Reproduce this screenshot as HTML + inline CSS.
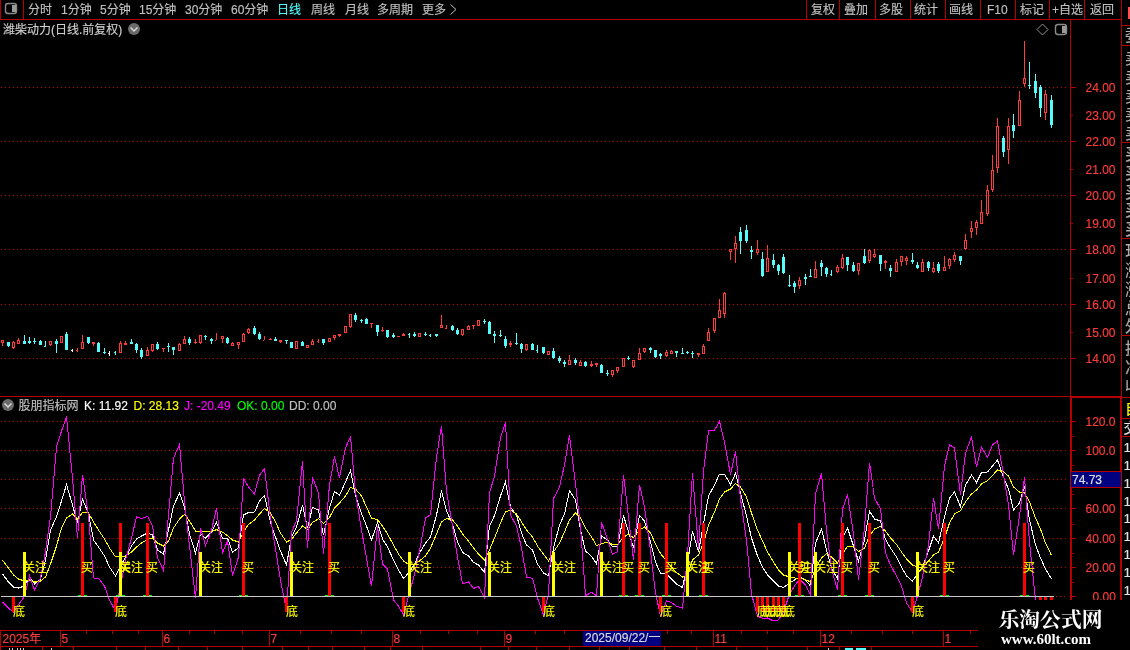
<!DOCTYPE html>
<html lang="zh-CN"><head><meta charset="utf-8"><title>潍柴动力 日线</title>
<style>
html,body{margin:0;padding:0;background:#000;overflow:hidden}
body{width:1130px;height:650px}
svg{display:block;font-family:"Liberation Sans","Noto Sans CJK SC",sans-serif;will-change:transform}
svg text{white-space:pre;stroke-width:0.15px;paint-order:stroke}
</style></head><body>
<svg width="1130" height="650" viewBox="0 0 1130 650" shape-rendering="crispEdges">
<rect width="1130" height="650" fill="#000"/>
<rect x="0" y="19" width="1122" height="1" fill="#b40000"/>
<rect x="0" y="0" width="1" height="20" fill="#b40000"/>
<rect x="23" y="0" width="1" height="20" fill="#b40000"/>
<rect x="806" y="0" width="1" height="20" fill="#b40000"/>
<rect x="839" y="0" width="1" height="20" fill="#b40000"/>
<rect x="875" y="0" width="1" height="20" fill="#b40000"/>
<rect x="910" y="0" width="1" height="20" fill="#b40000"/>
<rect x="945" y="0" width="1" height="20" fill="#b40000"/>
<rect x="980" y="0" width="1" height="20" fill="#b40000"/>
<rect x="1015" y="0" width="1" height="20" fill="#b40000"/>
<rect x="1049" y="0" width="1" height="20" fill="#b40000"/>
<rect x="1084" y="0" width="1" height="20" fill="#b40000"/>
<rect x="1121" y="0" width="1" height="650" fill="#b40000"/>
<rect x="1070" y="20" width="1" height="580" fill="#b40000"/>
<rect x="0" y="396" width="1122" height="1" fill="#b40000"/>
<rect x="0" y="630" width="978" height="1" fill="#b40000"/>
<rect x="0" y="646" width="978" height="1" fill="#b40000"/>
<rect x="0" y="630" width="1" height="20" fill="#b40000"/>
<rect x="5.5" y="3.5" width="11" height="10" rx="2.5" fill="none" stroke="#8a8a8a" stroke-width="1.4" shape-rendering="geometricPrecision"/>
<rect x="12" y="5" width="3.5" height="7" fill="#9a9a9a"/>
<text x="28" y="14" fill="#c0c0c0" stroke="#c0c0c0" font-size="12">分时</text>
<text x="61" y="14" fill="#c0c0c0" stroke="#c0c0c0" font-size="12">1分钟</text>
<text x="100" y="14" fill="#c0c0c0" stroke="#c0c0c0" font-size="12">5分钟</text>
<text x="139" y="14" fill="#c0c0c0" stroke="#c0c0c0" font-size="12">15分钟</text>
<text x="185" y="14" fill="#c0c0c0" stroke="#c0c0c0" font-size="12">30分钟</text>
<text x="231" y="14" fill="#c0c0c0" stroke="#c0c0c0" font-size="12">60分钟</text>
<text x="277" y="14" fill="#54fcfc" stroke="#54fcfc" font-size="12">日线</text>
<text x="311" y="14" fill="#c0c0c0" stroke="#c0c0c0" font-size="12">周线</text>
<text x="345" y="14" fill="#c0c0c0" stroke="#c0c0c0" font-size="12">月线</text>
<text x="377" y="14" fill="#c0c0c0" stroke="#c0c0c0" font-size="12">多周期</text>
<text x="422" y="14" fill="#c0c0c0" stroke="#c0c0c0" font-size="12">更多</text>
<path d="M450.5 4.5 L456 9.5 L450.5 14.5" fill="none" stroke="#c0c0c0" stroke-width="1" shape-rendering="geometricPrecision"/>
<text x="811" y="14" fill="#c0c0c0" stroke="#c0c0c0" font-size="12">复权</text>
<text x="844" y="14" fill="#c0c0c0" stroke="#c0c0c0" font-size="12">叠加</text>
<text x="879" y="14" fill="#c0c0c0" stroke="#c0c0c0" font-size="12">多股</text>
<text x="914" y="14" fill="#c0c0c0" stroke="#c0c0c0" font-size="12">统计</text>
<text x="949" y="14" fill="#c0c0c0" stroke="#c0c0c0" font-size="12">画线</text>
<text x="987" y="14" fill="#c0c0c0" stroke="#c0c0c0" font-size="12">F10</text>
<text x="1020" y="14" fill="#c0c0c0" stroke="#c0c0c0" font-size="12">标记</text>
<text x="1052" y="14" fill="#c0c0c0" stroke="#c0c0c0" font-size="12">+自选</text>
<text x="1090" y="14" fill="#c0c0c0" stroke="#c0c0c0" font-size="12">返回</text>
<text x="3" y="34" fill="#d0d0d0" stroke="#d0d0d0" font-size="12">潍柴动力(日线.前复权)</text>
<circle cx="134" cy="29" r="6" fill="#6a6a6a" shape-rendering="geometricPrecision"/>
<path d="M130.5 27.5 L134 31 L137.5 27.5" fill="none" stroke="#d8d8d8" stroke-width="1.5" shape-rendering="geometricPrecision"/>
<path d="M1042.5 24 L1048 29.5 L1042.5 35 L1037 29.5 Z" fill="none" stroke="#909090" stroke-width="1" shape-rendering="geometricPrecision"/>
<rect x="1055.5" y="24.5" width="11" height="10" rx="2.5" fill="none" stroke="#8a8a8a" stroke-width="1.4" shape-rendering="geometricPrecision"/>
<rect x="1062" y="26" width="3.5" height="7" fill="#9a9a9a"/>
<line x1="1" y1="358.5" x2="1068" y2="358.5" stroke="#c80000" stroke-width="1" stroke-dasharray="1 3"/>
<rect x="1070" y="358" width="6" height="1" fill="#b40000"/>
<text x="1085.5" y="363" fill="#ff3c3c" stroke="#ff3c3c" font-size="12">14.00</text>
<rect x="1070" y="332" width="3" height="1" fill="#b40000"/>
<text x="1085.5" y="337" fill="#ff3c3c" stroke="#ff3c3c" font-size="12">15.00</text>
<line x1="1" y1="304.5" x2="1068" y2="304.5" stroke="#c80000" stroke-width="1" stroke-dasharray="1 3"/>
<rect x="1070" y="304" width="6" height="1" fill="#b40000"/>
<text x="1085.5" y="309" fill="#ff3c3c" stroke="#ff3c3c" font-size="12">16.00</text>
<rect x="1070" y="278" width="3" height="1" fill="#b40000"/>
<text x="1085.5" y="283" fill="#ff3c3c" stroke="#ff3c3c" font-size="12">17.00</text>
<line x1="1" y1="249.5" x2="1068" y2="249.5" stroke="#c80000" stroke-width="1" stroke-dasharray="1 3"/>
<rect x="1070" y="249" width="6" height="1" fill="#b40000"/>
<text x="1085.5" y="254" fill="#ff3c3c" stroke="#ff3c3c" font-size="12">18.00</text>
<rect x="1070" y="223" width="3" height="1" fill="#b40000"/>
<text x="1085.5" y="228" fill="#ff3c3c" stroke="#ff3c3c" font-size="12">19.00</text>
<line x1="1" y1="195.5" x2="1068" y2="195.5" stroke="#c80000" stroke-width="1" stroke-dasharray="1 3"/>
<rect x="1070" y="195" width="6" height="1" fill="#b40000"/>
<text x="1085.5" y="200" fill="#ff3c3c" stroke="#ff3c3c" font-size="12">20.00</text>
<rect x="1070" y="169" width="3" height="1" fill="#b40000"/>
<text x="1085.5" y="174" fill="#ff3c3c" stroke="#ff3c3c" font-size="12">21.00</text>
<line x1="1" y1="141.5" x2="1068" y2="141.5" stroke="#c80000" stroke-width="1" stroke-dasharray="1 3"/>
<rect x="1070" y="141" width="6" height="1" fill="#b40000"/>
<text x="1085.5" y="146" fill="#ff3c3c" stroke="#ff3c3c" font-size="12">22.00</text>
<rect x="1070" y="115" width="3" height="1" fill="#b40000"/>
<text x="1085.5" y="120" fill="#ff3c3c" stroke="#ff3c3c" font-size="12">23.00</text>
<line x1="1" y1="87.5" x2="1068" y2="87.5" stroke="#c80000" stroke-width="1" stroke-dasharray="1 3"/>
<rect x="1070" y="87" width="6" height="1" fill="#b40000"/>
<text x="1085.5" y="92" fill="#ff3c3c" stroke="#ff3c3c" font-size="12">24.00</text>
<rect x="2" y="343" width="1" height="3" fill="#ff3c3c"/>
<rect x="1.5" y="340.5" width="2" height="2" fill="#000" stroke="#ff3c3c" stroke-width="1"/>
<rect x="8" y="342" width="1" height="5" fill="#54fcfc"/>
<rect x="7" y="342" width="3" height="4" fill="#54fcfc"/>
<rect x="13" y="341" width="1" height="1" fill="#ff3c3c"/>
<rect x="13" y="348" width="1" height="1" fill="#ff3c3c"/>
<rect x="12.5" y="342.5" width="2" height="5" fill="#000" stroke="#ff3c3c" stroke-width="1"/>
<rect x="18" y="338" width="1" height="2" fill="#ff3c3c"/>
<rect x="17.5" y="340.5" width="2" height="3" fill="#000" stroke="#ff3c3c" stroke-width="1"/>
<rect x="24" y="335" width="1" height="9" fill="#54fcfc"/>
<rect x="23" y="341" width="3" height="3" fill="#54fcfc"/>
<rect x="29" y="337" width="1" height="7" fill="#54fcfc"/>
<rect x="28" y="341" width="3" height="2" fill="#54fcfc"/>
<rect x="34" y="338" width="1" height="6" fill="#54fcfc"/>
<rect x="33" y="341" width="3" height="1" fill="#54fcfc"/>
<rect x="40" y="340" width="1" height="5" fill="#54fcfc"/>
<rect x="39" y="341" width="3" height="4" fill="#54fcfc"/>
<rect x="45" y="341" width="1" height="6" fill="#54fcfc"/>
<rect x="44" y="346" width="1" height="1" fill="#54fcfc"/>
<rect x="50" y="345" width="1" height="1" fill="#ff3c3c"/>
<rect x="49.5" y="341.5" width="2" height="3" fill="#000" stroke="#ff3c3c" stroke-width="1"/>
<rect x="56" y="339" width="1" height="14" fill="#54fcfc"/>
<rect x="55" y="341" width="3" height="3" fill="#54fcfc"/>
<rect x="60.5" y="336.5" width="2" height="6" fill="#000" stroke="#ff3c3c" stroke-width="1"/>
<rect x="66" y="332" width="1" height="18" fill="#54fcfc"/>
<rect x="65" y="334" width="3" height="16" fill="#54fcfc"/>
<rect x="72" y="349" width="1" height="3" fill="#ffffff"/>
<rect x="71" y="350" width="1" height="1" fill="#ffffff"/>
<rect x="77" y="348" width="1" height="4" fill="#ff3c3c"/>
<rect x="76" y="350" width="1" height="1" fill="#ff3c3c"/>
<rect x="82" y="335" width="1" height="7" fill="#ff3c3c"/>
<rect x="81.5" y="342.5" width="2" height="6" fill="#000" stroke="#ff3c3c" stroke-width="1"/>
<rect x="88" y="337" width="1" height="7" fill="#54fcfc"/>
<rect x="87" y="337" width="3" height="6" fill="#54fcfc"/>
<rect x="93" y="344" width="1" height="2" fill="#ff3c3c"/>
<rect x="92.5" y="342.5" width="2" height="1" fill="#000" stroke="#ff3c3c" stroke-width="1"/>
<rect x="98" y="342" width="1" height="10" fill="#54fcfc"/>
<rect x="97" y="343" width="3" height="9" fill="#54fcfc"/>
<rect x="104" y="348" width="1" height="6" fill="#54fcfc"/>
<rect x="103" y="352" width="3" height="1" fill="#54fcfc"/>
<rect x="109" y="351" width="1" height="5" fill="#ffffff"/>
<rect x="108" y="353" width="1" height="1" fill="#ffffff"/>
<rect x="115" y="351" width="1" height="4" fill="#54fcfc"/>
<rect x="114" y="352" width="1" height="1" fill="#54fcfc"/>
<rect x="120" y="341" width="1" height="2" fill="#ff3c3c"/>
<rect x="119.5" y="343.5" width="2" height="9" fill="#000" stroke="#ff3c3c" stroke-width="1"/>
<rect x="125" y="341" width="1" height="2" fill="#ff3c3c"/>
<rect x="124.5" y="343.5" width="2" height="1" fill="#000" stroke="#ff3c3c" stroke-width="1"/>
<rect x="131" y="339" width="1" height="5" fill="#54fcfc"/>
<rect x="130" y="342" width="3" height="2" fill="#54fcfc"/>
<rect x="136" y="343" width="1" height="10" fill="#54fcfc"/>
<rect x="135" y="344" width="3" height="6" fill="#54fcfc"/>
<rect x="141" y="348" width="1" height="11" fill="#54fcfc"/>
<rect x="140" y="350" width="3" height="7" fill="#54fcfc"/>
<rect x="147" y="347" width="1" height="3" fill="#ff3c3c"/>
<rect x="146.5" y="350.5" width="2" height="5" fill="#000" stroke="#ff3c3c" stroke-width="1"/>
<rect x="152" y="351" width="1" height="1" fill="#ff3c3c"/>
<rect x="151.5" y="344.5" width="2" height="6" fill="#000" stroke="#ff3c3c" stroke-width="1"/>
<rect x="157" y="342" width="1" height="8" fill="#54fcfc"/>
<rect x="156" y="344" width="3" height="5" fill="#54fcfc"/>
<rect x="163" y="348" width="1" height="4" fill="#ff3c3c"/>
<rect x="162" y="348" width="3" height="1" fill="#ff3c3c"/>
<rect x="168" y="343" width="1" height="9" fill="#54fcfc"/>
<rect x="167" y="346" width="3" height="1" fill="#54fcfc"/>
<rect x="173" y="347" width="1" height="8" fill="#54fcfc"/>
<rect x="172" y="347" width="3" height="3" fill="#54fcfc"/>
<rect x="179" y="343" width="1" height="1" fill="#ff3c3c"/>
<rect x="178.5" y="344.5" width="2" height="6" fill="#000" stroke="#ff3c3c" stroke-width="1"/>
<rect x="184" y="336" width="1" height="3" fill="#ff3c3c"/>
<rect x="183.5" y="339.5" width="2" height="4" fill="#000" stroke="#ff3c3c" stroke-width="1"/>
<rect x="189" y="337" width="1" height="8" fill="#54fcfc"/>
<rect x="188" y="339" width="3" height="4" fill="#54fcfc"/>
<rect x="195" y="339" width="1" height="5" fill="#ff3c3c"/>
<rect x="194" y="342" width="3" height="1" fill="#ff3c3c"/>
<rect x="200" y="343" width="1" height="1" fill="#ff3c3c"/>
<rect x="199.5" y="335.5" width="2" height="7" fill="#000" stroke="#ff3c3c" stroke-width="1"/>
<rect x="205" y="335" width="1" height="5" fill="#54fcfc"/>
<rect x="204" y="336" width="3" height="1" fill="#54fcfc"/>
<rect x="211" y="338" width="1" height="6" fill="#54fcfc"/>
<rect x="210" y="339" width="3" height="2" fill="#54fcfc"/>
<rect x="216" y="333" width="1" height="7" fill="#ff3c3c"/>
<rect x="215" y="340" width="1" height="1" fill="#ff3c3c"/>
<rect x="222" y="339" width="1" height="4" fill="#ff3c3c"/>
<rect x="221.5" y="336.5" width="2" height="2" fill="#000" stroke="#ff3c3c" stroke-width="1"/>
<rect x="227" y="337" width="1" height="7" fill="#54fcfc"/>
<rect x="226" y="338" width="3" height="5" fill="#54fcfc"/>
<rect x="232" y="342" width="1" height="1" fill="#ff3c3c"/>
<rect x="231.5" y="343.5" width="2" height="2" fill="#000" stroke="#ff3c3c" stroke-width="1"/>
<rect x="238" y="345" width="1" height="4" fill="#ff3c3c"/>
<rect x="237.5" y="342.5" width="2" height="2" fill="#000" stroke="#ff3c3c" stroke-width="1"/>
<rect x="243" y="333" width="1" height="1" fill="#ff3c3c"/>
<rect x="242.5" y="334.5" width="2" height="7" fill="#000" stroke="#ff3c3c" stroke-width="1"/>
<rect x="248" y="328" width="1" height="1" fill="#ff3c3c"/>
<rect x="248" y="333" width="1" height="1" fill="#ff3c3c"/>
<rect x="247.5" y="329.5" width="2" height="3" fill="#000" stroke="#ff3c3c" stroke-width="1"/>
<rect x="254" y="326" width="1" height="9" fill="#54fcfc"/>
<rect x="253" y="328" width="3" height="6" fill="#54fcfc"/>
<rect x="259" y="332" width="1" height="8" fill="#54fcfc"/>
<rect x="258" y="334" width="3" height="5" fill="#54fcfc"/>
<rect x="264" y="336" width="1" height="4" fill="#ff3c3c"/>
<rect x="263" y="340" width="1" height="1" fill="#ff3c3c"/>
<rect x="270" y="338" width="1" height="2" fill="#ff3c3c"/>
<rect x="269" y="339" width="3" height="1" fill="#ff3c3c"/>
<rect x="275" y="337" width="1" height="3" fill="#54fcfc"/>
<rect x="274" y="339" width="3" height="2" fill="#54fcfc"/>
<rect x="280" y="342" width="1" height="1" fill="#ff3c3c"/>
<rect x="279.5" y="340.5" width="2" height="1" fill="#000" stroke="#ff3c3c" stroke-width="1"/>
<rect x="286" y="340" width="1" height="4" fill="#54fcfc"/>
<rect x="285" y="340" width="3" height="1" fill="#54fcfc"/>
<rect x="291" y="342" width="1" height="6" fill="#54fcfc"/>
<rect x="290" y="342" width="3" height="6" fill="#54fcfc"/>
<rect x="295.5" y="341.5" width="2" height="7" fill="#000" stroke="#ff3c3c" stroke-width="1"/>
<rect x="302" y="341" width="1" height="5" fill="#54fcfc"/>
<rect x="301" y="342" width="3" height="4" fill="#54fcfc"/>
<rect x="306.5" y="345.5" width="2" height="2" fill="#000" stroke="#ff3c3c" stroke-width="1"/>
<rect x="312" y="339" width="1" height="2" fill="#ff3c3c"/>
<rect x="311.5" y="341.5" width="2" height="3" fill="#000" stroke="#ff3c3c" stroke-width="1"/>
<rect x="318" y="339" width="1" height="4" fill="#ff3c3c"/>
<rect x="317" y="341" width="1" height="1" fill="#ff3c3c"/>
<rect x="323" y="339" width="1" height="6" fill="#54fcfc"/>
<rect x="322" y="339" width="3" height="4" fill="#54fcfc"/>
<rect x="328.5" y="338.5" width="2" height="3" fill="#000" stroke="#ff3c3c" stroke-width="1"/>
<rect x="334" y="338" width="1" height="2" fill="#ff3c3c"/>
<rect x="333.5" y="335.5" width="2" height="2" fill="#000" stroke="#ff3c3c" stroke-width="1"/>
<rect x="339" y="336" width="1" height="1" fill="#ff3c3c"/>
<rect x="338.5" y="334.5" width="2" height="1" fill="#000" stroke="#ff3c3c" stroke-width="1"/>
<rect x="344.5" y="326.5" width="2" height="6" fill="#000" stroke="#ff3c3c" stroke-width="1"/>
<rect x="350" y="327" width="1" height="1" fill="#ff3c3c"/>
<rect x="349.5" y="314.5" width="2" height="12" fill="#000" stroke="#ff3c3c" stroke-width="1"/>
<rect x="355" y="313" width="1" height="9" fill="#54fcfc"/>
<rect x="354" y="315" width="3" height="5" fill="#54fcfc"/>
<rect x="361" y="319" width="1" height="4" fill="#54fcfc"/>
<rect x="360" y="320" width="3" height="1" fill="#54fcfc"/>
<rect x="366" y="318" width="1" height="6" fill="#54fcfc"/>
<rect x="365" y="319" width="3" height="5" fill="#54fcfc"/>
<rect x="371" y="323" width="1" height="5" fill="#ff3c3c"/>
<rect x="370" y="323" width="3" height="1" fill="#ff3c3c"/>
<rect x="377" y="325" width="1" height="11" fill="#54fcfc"/>
<rect x="376" y="325" width="3" height="7" fill="#54fcfc"/>
<rect x="382" y="327" width="1" height="5" fill="#ff3c3c"/>
<rect x="381" y="330" width="3" height="1" fill="#ff3c3c"/>
<rect x="387" y="330" width="1" height="8" fill="#54fcfc"/>
<rect x="386" y="330" width="3" height="7" fill="#54fcfc"/>
<rect x="393" y="333" width="1" height="5" fill="#54fcfc"/>
<rect x="392" y="335" width="3" height="2" fill="#54fcfc"/>
<rect x="398" y="336" width="1" height="1" fill="#ff3c3c"/>
<rect x="397" y="336" width="3" height="1" fill="#ff3c3c"/>
<rect x="403" y="333" width="1" height="1" fill="#ff3c3c"/>
<rect x="402.5" y="334.5" width="2" height="1" fill="#000" stroke="#ff3c3c" stroke-width="1"/>
<rect x="409" y="333" width="1" height="5" fill="#54fcfc"/>
<rect x="408" y="334" width="1" height="1" fill="#54fcfc"/>
<rect x="414" y="332" width="1" height="5" fill="#54fcfc"/>
<rect x="413" y="334" width="3" height="2" fill="#54fcfc"/>
<rect x="418.5" y="333.5" width="2" height="3" fill="#000" stroke="#ff3c3c" stroke-width="1"/>
<rect x="425" y="332" width="1" height="4" fill="#54fcfc"/>
<rect x="424" y="334" width="3" height="1" fill="#54fcfc"/>
<rect x="430" y="334" width="1" height="3" fill="#54fcfc"/>
<rect x="429" y="335" width="1" height="1" fill="#54fcfc"/>
<rect x="436" y="334" width="1" height="3" fill="#54fcfc"/>
<rect x="435" y="334" width="3" height="2" fill="#54fcfc"/>
<rect x="441" y="315" width="1" height="10" fill="#ff3c3c"/>
<rect x="440.5" y="325.5" width="2" height="2" fill="#000" stroke="#ff3c3c" stroke-width="1"/>
<rect x="446" y="325" width="1" height="4" fill="#ff3c3c"/>
<rect x="445" y="328" width="1" height="1" fill="#ff3c3c"/>
<rect x="452" y="325" width="1" height="6" fill="#54fcfc"/>
<rect x="451" y="326" width="3" height="4" fill="#54fcfc"/>
<rect x="457" y="328" width="1" height="7" fill="#54fcfc"/>
<rect x="456" y="330" width="3" height="4" fill="#54fcfc"/>
<rect x="462" y="335" width="1" height="1" fill="#ff3c3c"/>
<rect x="461.5" y="329.5" width="2" height="5" fill="#000" stroke="#ff3c3c" stroke-width="1"/>
<rect x="468" y="325" width="1" height="1" fill="#ff3c3c"/>
<rect x="467.5" y="326.5" width="2" height="3" fill="#000" stroke="#ff3c3c" stroke-width="1"/>
<rect x="473" y="325" width="1" height="4" fill="#ff3c3c"/>
<rect x="472" y="325" width="3" height="1" fill="#ff3c3c"/>
<rect x="477.5" y="320.5" width="2" height="5" fill="#000" stroke="#ff3c3c" stroke-width="1"/>
<rect x="484" y="319" width="1" height="5" fill="#54fcfc"/>
<rect x="483" y="321" width="3" height="1" fill="#54fcfc"/>
<rect x="489" y="321" width="1" height="13" fill="#54fcfc"/>
<rect x="488" y="322" width="3" height="12" fill="#54fcfc"/>
<rect x="494" y="331" width="1" height="12" fill="#54fcfc"/>
<rect x="493" y="334" width="3" height="2" fill="#54fcfc"/>
<rect x="500" y="330" width="1" height="7" fill="#54fcfc"/>
<rect x="499" y="335" width="3" height="1" fill="#54fcfc"/>
<rect x="505" y="336" width="1" height="12" fill="#54fcfc"/>
<rect x="504" y="339" width="3" height="7" fill="#54fcfc"/>
<rect x="510" y="341" width="1" height="2" fill="#ff3c3c"/>
<rect x="510" y="345" width="1" height="2" fill="#ff3c3c"/>
<rect x="509.5" y="343.5" width="2" height="1" fill="#000" stroke="#ff3c3c" stroke-width="1"/>
<rect x="516" y="333" width="1" height="12" fill="#54fcfc"/>
<rect x="515" y="343" width="3" height="1" fill="#54fcfc"/>
<rect x="521" y="343" width="1" height="10" fill="#54fcfc"/>
<rect x="520" y="344" width="3" height="5" fill="#54fcfc"/>
<rect x="526" y="350" width="1" height="1" fill="#ff3c3c"/>
<rect x="525.5" y="344.5" width="2" height="5" fill="#000" stroke="#ff3c3c" stroke-width="1"/>
<rect x="532" y="343" width="1" height="7" fill="#54fcfc"/>
<rect x="531" y="344" width="3" height="6" fill="#54fcfc"/>
<rect x="537" y="345" width="1" height="8" fill="#54fcfc"/>
<rect x="536" y="350" width="1" height="1" fill="#54fcfc"/>
<rect x="543" y="347" width="1" height="7" fill="#54fcfc"/>
<rect x="542" y="347" width="3" height="6" fill="#54fcfc"/>
<rect x="547.5" y="351.5" width="2" height="3" fill="#000" stroke="#ff3c3c" stroke-width="1"/>
<rect x="553" y="348" width="1" height="11" fill="#54fcfc"/>
<rect x="552" y="351" width="3" height="7" fill="#54fcfc"/>
<rect x="559" y="356" width="1" height="7" fill="#54fcfc"/>
<rect x="558" y="358" width="3" height="3" fill="#54fcfc"/>
<rect x="564" y="360" width="1" height="7" fill="#54fcfc"/>
<rect x="563" y="362" width="3" height="2" fill="#54fcfc"/>
<rect x="569" y="355" width="1" height="5" fill="#ff3c3c"/>
<rect x="568.5" y="360.5" width="2" height="4" fill="#000" stroke="#ff3c3c" stroke-width="1"/>
<rect x="575" y="358" width="1" height="7" fill="#54fcfc"/>
<rect x="574" y="360" width="3" height="3" fill="#54fcfc"/>
<rect x="580" y="360" width="1" height="2" fill="#ff3c3c"/>
<rect x="579.5" y="362.5" width="2" height="3" fill="#000" stroke="#ff3c3c" stroke-width="1"/>
<rect x="585" y="361" width="1" height="6" fill="#54fcfc"/>
<rect x="584" y="362" width="3" height="4" fill="#54fcfc"/>
<rect x="591" y="361" width="1" height="3" fill="#ff3c3c"/>
<rect x="591" y="366" width="1" height="1" fill="#ff3c3c"/>
<rect x="590.5" y="364.5" width="2" height="1" fill="#000" stroke="#ff3c3c" stroke-width="1"/>
<rect x="596" y="365" width="1" height="2" fill="#ff3c3c"/>
<rect x="595.5" y="363.5" width="2" height="1" fill="#000" stroke="#ff3c3c" stroke-width="1"/>
<rect x="601" y="364" width="1" height="9" fill="#54fcfc"/>
<rect x="600" y="365" width="3" height="8" fill="#54fcfc"/>
<rect x="607" y="370" width="1" height="6" fill="#54fcfc"/>
<rect x="606" y="373" width="3" height="1" fill="#54fcfc"/>
<rect x="612" y="375" width="1" height="2" fill="#ff3c3c"/>
<rect x="611.5" y="370.5" width="2" height="4" fill="#000" stroke="#ff3c3c" stroke-width="1"/>
<rect x="617" y="371" width="1" height="2" fill="#ff3c3c"/>
<rect x="616.5" y="367.5" width="2" height="3" fill="#000" stroke="#ff3c3c" stroke-width="1"/>
<rect x="622.5" y="358.5" width="2" height="8" fill="#000" stroke="#ff3c3c" stroke-width="1"/>
<rect x="628" y="356" width="1" height="4" fill="#54fcfc"/>
<rect x="627" y="358" width="3" height="1" fill="#54fcfc"/>
<rect x="633" y="367" width="1" height="1" fill="#ff3c3c"/>
<rect x="632.5" y="360.5" width="2" height="6" fill="#000" stroke="#ff3c3c" stroke-width="1"/>
<rect x="639" y="348" width="1" height="5" fill="#ff3c3c"/>
<rect x="638.5" y="353.5" width="2" height="6" fill="#000" stroke="#ff3c3c" stroke-width="1"/>
<rect x="644" y="352" width="1" height="1" fill="#ff3c3c"/>
<rect x="643.5" y="348.5" width="2" height="3" fill="#000" stroke="#ff3c3c" stroke-width="1"/>
<rect x="650" y="347" width="1" height="6" fill="#54fcfc"/>
<rect x="649" y="348" width="3" height="2" fill="#54fcfc"/>
<rect x="655" y="350" width="1" height="8" fill="#54fcfc"/>
<rect x="654" y="350" width="3" height="7" fill="#54fcfc"/>
<rect x="660" y="353" width="1" height="6" fill="#54fcfc"/>
<rect x="659" y="354" width="3" height="2" fill="#54fcfc"/>
<rect x="666" y="350" width="1" height="2" fill="#ff3c3c"/>
<rect x="666" y="356" width="1" height="1" fill="#ff3c3c"/>
<rect x="665.5" y="352.5" width="2" height="3" fill="#000" stroke="#ff3c3c" stroke-width="1"/>
<rect x="671" y="350" width="1" height="1" fill="#ff3c3c"/>
<rect x="670.5" y="351.5" width="2" height="2" fill="#000" stroke="#ff3c3c" stroke-width="1"/>
<rect x="676" y="351" width="1" height="6" fill="#54fcfc"/>
<rect x="675" y="351" width="3" height="2" fill="#54fcfc"/>
<rect x="682" y="348" width="1" height="6" fill="#54fcfc"/>
<rect x="681" y="353" width="3" height="1" fill="#54fcfc"/>
<rect x="687" y="351" width="1" height="3" fill="#54fcfc"/>
<rect x="686" y="352" width="3" height="1" fill="#54fcfc"/>
<rect x="692" y="351" width="1" height="7" fill="#54fcfc"/>
<rect x="691" y="353" width="3" height="1" fill="#54fcfc"/>
<rect x="698" y="355" width="1" height="2" fill="#ff3c3c"/>
<rect x="697.5" y="353.5" width="2" height="1" fill="#000" stroke="#ff3c3c" stroke-width="1"/>
<rect x="703" y="344" width="1" height="2" fill="#ff3c3c"/>
<rect x="702.5" y="346.5" width="2" height="7" fill="#000" stroke="#ff3c3c" stroke-width="1"/>
<rect x="708" y="328" width="1" height="4" fill="#ff3c3c"/>
<rect x="707.5" y="332.5" width="2" height="8" fill="#000" stroke="#ff3c3c" stroke-width="1"/>
<rect x="714" y="331" width="1" height="2" fill="#ff3c3c"/>
<rect x="713.5" y="318.5" width="2" height="12" fill="#000" stroke="#ff3c3c" stroke-width="1"/>
<rect x="719" y="299" width="1" height="11" fill="#ff3c3c"/>
<rect x="718.5" y="310.5" width="2" height="7" fill="#000" stroke="#ff3c3c" stroke-width="1"/>
<rect x="724" y="292" width="1" height="1" fill="#ff3c3c"/>
<rect x="724" y="314" width="1" height="4" fill="#ff3c3c"/>
<rect x="723.5" y="293.5" width="2" height="20" fill="#000" stroke="#ff3c3c" stroke-width="1"/>
<rect x="730" y="252" width="1" height="8" fill="#ff3c3c"/>
<rect x="729.5" y="249.5" width="2" height="2" fill="#000" stroke="#ff3c3c" stroke-width="1"/>
<rect x="735" y="236" width="1" height="7" fill="#ff3c3c"/>
<rect x="735" y="249" width="1" height="14" fill="#ff3c3c"/>
<rect x="734.5" y="243.5" width="2" height="5" fill="#000" stroke="#ff3c3c" stroke-width="1"/>
<rect x="740" y="227" width="1" height="27" fill="#54fcfc"/>
<rect x="739" y="232" width="3" height="9" fill="#54fcfc"/>
<rect x="746" y="225" width="1" height="18" fill="#54fcfc"/>
<rect x="745" y="230" width="3" height="11" fill="#54fcfc"/>
<rect x="751" y="246" width="1" height="13" fill="#54fcfc"/>
<rect x="750" y="250" width="3" height="2" fill="#54fcfc"/>
<rect x="757" y="240" width="1" height="9" fill="#ff3c3c"/>
<rect x="757" y="253" width="1" height="2" fill="#ff3c3c"/>
<rect x="756.5" y="249.5" width="2" height="3" fill="#000" stroke="#ff3c3c" stroke-width="1"/>
<rect x="762" y="252" width="1" height="25" fill="#54fcfc"/>
<rect x="761" y="259" width="3" height="17" fill="#54fcfc"/>
<rect x="767" y="245" width="1" height="13" fill="#ff3c3c"/>
<rect x="766.5" y="258.5" width="2" height="13" fill="#000" stroke="#ff3c3c" stroke-width="1"/>
<rect x="773" y="254" width="1" height="14" fill="#54fcfc"/>
<rect x="772" y="260" width="3" height="5" fill="#54fcfc"/>
<rect x="778" y="264" width="1" height="11" fill="#54fcfc"/>
<rect x="777" y="265" width="3" height="6" fill="#54fcfc"/>
<rect x="783" y="254" width="1" height="20" fill="#54fcfc"/>
<rect x="782" y="257" width="3" height="16" fill="#54fcfc"/>
<rect x="789" y="275" width="1" height="12" fill="#54fcfc"/>
<rect x="788" y="285" width="3" height="1" fill="#54fcfc"/>
<rect x="794" y="281" width="1" height="12" fill="#54fcfc"/>
<rect x="793" y="283" width="3" height="4" fill="#54fcfc"/>
<rect x="799" y="277" width="1" height="3" fill="#ff3c3c"/>
<rect x="799" y="286" width="1" height="3" fill="#ff3c3c"/>
<rect x="798.5" y="280.5" width="2" height="5" fill="#000" stroke="#ff3c3c" stroke-width="1"/>
<rect x="805" y="274" width="1" height="11" fill="#54fcfc"/>
<rect x="804" y="277" width="3" height="2" fill="#54fcfc"/>
<rect x="810" y="269" width="1" height="8" fill="#54fcfc"/>
<rect x="809" y="276" width="3" height="1" fill="#54fcfc"/>
<rect x="815" y="261" width="1" height="8" fill="#ff3c3c"/>
<rect x="814.5" y="269.5" width="2" height="8" fill="#000" stroke="#ff3c3c" stroke-width="1"/>
<rect x="821" y="260" width="1" height="16" fill="#54fcfc"/>
<rect x="820" y="263" width="3" height="4" fill="#54fcfc"/>
<rect x="826" y="267" width="1" height="10" fill="#54fcfc"/>
<rect x="825" y="268" width="3" height="6" fill="#54fcfc"/>
<rect x="831" y="270" width="1" height="6" fill="#54fcfc"/>
<rect x="830" y="274" width="1" height="1" fill="#54fcfc"/>
<rect x="837" y="265" width="1" height="2" fill="#ff3c3c"/>
<rect x="837" y="272" width="1" height="1" fill="#ff3c3c"/>
<rect x="836.5" y="267.5" width="2" height="4" fill="#000" stroke="#ff3c3c" stroke-width="1"/>
<rect x="842" y="254" width="1" height="4" fill="#ff3c3c"/>
<rect x="842" y="268" width="1" height="1" fill="#ff3c3c"/>
<rect x="841.5" y="258.5" width="2" height="9" fill="#000" stroke="#ff3c3c" stroke-width="1"/>
<rect x="847" y="257" width="1" height="14" fill="#54fcfc"/>
<rect x="846" y="257" width="3" height="8" fill="#54fcfc"/>
<rect x="853" y="262" width="1" height="10" fill="#54fcfc"/>
<rect x="852" y="265" width="3" height="6" fill="#54fcfc"/>
<rect x="858" y="271" width="1" height="4" fill="#ff3c3c"/>
<rect x="857.5" y="263.5" width="2" height="7" fill="#000" stroke="#ff3c3c" stroke-width="1"/>
<rect x="864" y="249" width="1" height="15" fill="#54fcfc"/>
<rect x="863" y="256" width="3" height="7" fill="#54fcfc"/>
<rect x="869" y="249" width="1" height="1" fill="#ff3c3c"/>
<rect x="869" y="261" width="1" height="2" fill="#ff3c3c"/>
<rect x="868.5" y="250.5" width="2" height="10" fill="#000" stroke="#ff3c3c" stroke-width="1"/>
<rect x="874" y="249" width="1" height="5" fill="#ff3c3c"/>
<rect x="874" y="257" width="1" height="1" fill="#ff3c3c"/>
<rect x="873.5" y="254.5" width="2" height="2" fill="#000" stroke="#ff3c3c" stroke-width="1"/>
<rect x="880" y="255" width="1" height="16" fill="#54fcfc"/>
<rect x="879" y="255" width="3" height="9" fill="#54fcfc"/>
<rect x="885" y="260" width="1" height="1" fill="#ff3c3c"/>
<rect x="885" y="263" width="1" height="6" fill="#ff3c3c"/>
<rect x="884.5" y="261.5" width="2" height="1" fill="#000" stroke="#ff3c3c" stroke-width="1"/>
<rect x="890" y="265" width="1" height="12" fill="#54fcfc"/>
<rect x="889" y="268" width="3" height="3" fill="#54fcfc"/>
<rect x="896" y="259" width="1" height="3" fill="#ff3c3c"/>
<rect x="895.5" y="262.5" width="2" height="9" fill="#000" stroke="#ff3c3c" stroke-width="1"/>
<rect x="901" y="262" width="1" height="4" fill="#ff3c3c"/>
<rect x="900.5" y="256.5" width="2" height="5" fill="#000" stroke="#ff3c3c" stroke-width="1"/>
<rect x="906" y="256" width="1" height="2" fill="#ff3c3c"/>
<rect x="906" y="261" width="1" height="4" fill="#ff3c3c"/>
<rect x="905.5" y="258.5" width="2" height="2" fill="#000" stroke="#ff3c3c" stroke-width="1"/>
<rect x="912" y="253" width="1" height="11" fill="#54fcfc"/>
<rect x="911" y="260" width="3" height="2" fill="#54fcfc"/>
<rect x="917" y="262" width="1" height="7" fill="#54fcfc"/>
<rect x="916" y="265" width="3" height="3" fill="#54fcfc"/>
<rect x="922" y="259" width="1" height="3" fill="#ff3c3c"/>
<rect x="921.5" y="262.5" width="2" height="9" fill="#000" stroke="#ff3c3c" stroke-width="1"/>
<rect x="928" y="261" width="1" height="10" fill="#54fcfc"/>
<rect x="927" y="262" width="3" height="6" fill="#54fcfc"/>
<rect x="933" y="262" width="1" height="6" fill="#ff3c3c"/>
<rect x="933" y="272" width="1" height="1" fill="#ff3c3c"/>
<rect x="932.5" y="268.5" width="2" height="3" fill="#000" stroke="#ff3c3c" stroke-width="1"/>
<rect x="938" y="262" width="1" height="11" fill="#54fcfc"/>
<rect x="937" y="264" width="3" height="7" fill="#54fcfc"/>
<rect x="944" y="256" width="1" height="11" fill="#ff3c3c"/>
<rect x="943.5" y="267.5" width="2" height="3" fill="#000" stroke="#ff3c3c" stroke-width="1"/>
<rect x="949" y="258" width="1" height="1" fill="#ff3c3c"/>
<rect x="949" y="266" width="1" height="3" fill="#ff3c3c"/>
<rect x="948.5" y="259.5" width="2" height="6" fill="#000" stroke="#ff3c3c" stroke-width="1"/>
<rect x="954" y="252" width="1" height="3" fill="#ff3c3c"/>
<rect x="954" y="260" width="1" height="2" fill="#ff3c3c"/>
<rect x="953.5" y="255.5" width="2" height="4" fill="#000" stroke="#ff3c3c" stroke-width="1"/>
<rect x="960" y="256" width="1" height="9" fill="#54fcfc"/>
<rect x="959" y="256" width="3" height="5" fill="#54fcfc"/>
<rect x="965" y="234" width="1" height="6" fill="#ff3c3c"/>
<rect x="965" y="249" width="1" height="1" fill="#ff3c3c"/>
<rect x="964.5" y="240.5" width="2" height="8" fill="#000" stroke="#ff3c3c" stroke-width="1"/>
<rect x="971" y="221" width="1" height="7" fill="#ff3c3c"/>
<rect x="971" y="232" width="1" height="6" fill="#ff3c3c"/>
<rect x="970.5" y="228.5" width="2" height="3" fill="#000" stroke="#ff3c3c" stroke-width="1"/>
<rect x="976" y="220" width="1" height="2" fill="#ff3c3c"/>
<rect x="976" y="228" width="1" height="7" fill="#ff3c3c"/>
<rect x="975.5" y="222.5" width="2" height="5" fill="#000" stroke="#ff3c3c" stroke-width="1"/>
<rect x="981" y="200" width="1" height="12" fill="#ff3c3c"/>
<rect x="980.5" y="212.5" width="2" height="11" fill="#000" stroke="#ff3c3c" stroke-width="1"/>
<rect x="987" y="185" width="1" height="5" fill="#ff3c3c"/>
<rect x="987" y="214" width="1" height="2" fill="#ff3c3c"/>
<rect x="986.5" y="190.5" width="2" height="23" fill="#000" stroke="#ff3c3c" stroke-width="1"/>
<rect x="992" y="155" width="1" height="15" fill="#ff3c3c"/>
<rect x="992" y="190" width="1" height="2" fill="#ff3c3c"/>
<rect x="991.5" y="170.5" width="2" height="19" fill="#000" stroke="#ff3c3c" stroke-width="1"/>
<rect x="997" y="118" width="1" height="8" fill="#ff3c3c"/>
<rect x="997" y="168" width="1" height="5" fill="#ff3c3c"/>
<rect x="996.5" y="126.5" width="2" height="41" fill="#000" stroke="#ff3c3c" stroke-width="1"/>
<rect x="1003" y="136" width="1" height="21" fill="#54fcfc"/>
<rect x="1002" y="138" width="3" height="14" fill="#54fcfc"/>
<rect x="1008" y="118" width="1" height="8" fill="#ff3c3c"/>
<rect x="1008" y="150" width="1" height="14" fill="#ff3c3c"/>
<rect x="1007.5" y="126.5" width="2" height="23" fill="#000" stroke="#ff3c3c" stroke-width="1"/>
<rect x="1013" y="114" width="1" height="24" fill="#54fcfc"/>
<rect x="1012" y="125" width="3" height="6" fill="#54fcfc"/>
<rect x="1019" y="91" width="1" height="9" fill="#ff3c3c"/>
<rect x="1018.5" y="100.5" width="2" height="25" fill="#000" stroke="#ff3c3c" stroke-width="1"/>
<rect x="1024" y="41" width="1" height="37" fill="#ff3c3c"/>
<rect x="1024" y="84" width="1" height="3" fill="#ff3c3c"/>
<rect x="1023.5" y="78.5" width="2" height="5" fill="#000" stroke="#ff3c3c" stroke-width="1"/>
<rect x="1029" y="62" width="1" height="27" fill="#54fcfc"/>
<rect x="1028" y="85" width="3" height="1" fill="#54fcfc"/>
<rect x="1035" y="74" width="1" height="24" fill="#54fcfc"/>
<rect x="1034" y="81" width="3" height="12" fill="#54fcfc"/>
<rect x="1040" y="85" width="1" height="32" fill="#54fcfc"/>
<rect x="1039" y="87" width="3" height="21" fill="#54fcfc"/>
<rect x="1045" y="90" width="1" height="4" fill="#ff3c3c"/>
<rect x="1045" y="113" width="1" height="7" fill="#ff3c3c"/>
<rect x="1044.5" y="94.5" width="2" height="18" fill="#000" stroke="#ff3c3c" stroke-width="1"/>
<rect x="1051" y="95" width="1" height="33" fill="#54fcfc"/>
<rect x="1050" y="100" width="3" height="25" fill="#54fcfc"/>
<line x1="1" y1="567.5" x2="1068" y2="567.5" stroke="#c80000" stroke-width="1" stroke-dasharray="1 3"/>
<line x1="1" y1="538.5" x2="1068" y2="538.5" stroke="#c80000" stroke-width="1" stroke-dasharray="1 3"/>
<line x1="1" y1="508.5" x2="1068" y2="508.5" stroke="#c80000" stroke-width="1" stroke-dasharray="1 3"/>
<line x1="1" y1="479.5" x2="1068" y2="479.5" stroke="#c80000" stroke-width="1" stroke-dasharray="1 3"/>
<line x1="1" y1="450.5" x2="1068" y2="450.5" stroke="#c80000" stroke-width="1" stroke-dasharray="1 3"/>
<line x1="1" y1="421.5" x2="1068" y2="421.5" stroke="#c80000" stroke-width="1" stroke-dasharray="1 3"/>
<rect x="1070" y="596" width="6" height="1" fill="#b40000"/>
<rect x="1070" y="582" width="4" height="1" fill="#b40000"/>
<rect x="1070" y="567" width="6" height="1" fill="#b40000"/>
<rect x="1070" y="553" width="4" height="1" fill="#b40000"/>
<rect x="1070" y="538" width="6" height="1" fill="#b40000"/>
<rect x="1070" y="524" width="4" height="1" fill="#b40000"/>
<rect x="1070" y="508" width="6" height="1" fill="#b40000"/>
<rect x="1070" y="494" width="4" height="1" fill="#b40000"/>
<rect x="1070" y="479" width="6" height="1" fill="#b40000"/>
<rect x="1070" y="465" width="4" height="1" fill="#b40000"/>
<rect x="1070" y="450" width="6" height="1" fill="#b40000"/>
<rect x="1070" y="436" width="4" height="1" fill="#b40000"/>
<rect x="1070" y="421" width="6" height="1" fill="#b40000"/>
<text x="1085.5" y="426" fill="#ff3c3c" stroke="#ff3c3c" font-size="12">120.0</text>
<text x="1085.5" y="455" fill="#ff3c3c" stroke="#ff3c3c" font-size="12">100.0</text>
<text x="1085.5" y="513" fill="#ff3c3c" stroke="#ff3c3c" font-size="12">60.00</text>
<text x="1085.5" y="543" fill="#ff3c3c" stroke="#ff3c3c" font-size="12">40.00</text>
<text x="1085.5" y="572" fill="#ff3c3c" stroke="#ff3c3c" font-size="12">20.00</text>
<text x="1092.5" y="601" fill="#ff3c3c" stroke="#ff3c3c" font-size="12">0.00</text>
<rect x="1071" y="396" width="1" height="204" fill="#b40000"/>
<rect x="1120" y="396" width="1" height="254" fill="#b40000"/>
<rect x="1070" y="397" width="52" height="1" fill="#b40000"/>
<rect x="1071" y="472" width="50" height="15" fill="#000080"/>
<rect x="1071" y="471" width="50" height="1" fill="#b40000"/>
<rect x="1071" y="487" width="50" height="1" fill="#b40000"/>
<text x="1072" y="484" fill="#e0e0e0" stroke="#e0e0e0" font-size="12">74.73</text>
<circle cx="8" cy="405" r="6" fill="#6a6a6a" shape-rendering="geometricPrecision"/>
<path d="M4.5 403.5 L8 407 L11.5 403.5" fill="none" stroke="#d8d8d8" stroke-width="1.5" shape-rendering="geometricPrecision"/>
<text x="18.5" y="410" fill="#c0c0c0" stroke="#c0c0c0" font-size="12">股朋指标网</text>
<text x="84" y="410" fill="#ffffff" stroke="#ffffff" font-size="12">K: 11.92</text>
<text x="133.5" y="410" fill="#ffff00" stroke="#ffff00" font-size="12">D: 28.13</text>
<text x="184" y="410" fill="#ff00ff" stroke="#ff00ff" font-size="12">J: -20.49</text>
<text x="237" y="410" fill="#00ff00" stroke="#00ff00" font-size="12">OK: 0.00</text>
<text x="289" y="410" fill="#c0c0c0" stroke="#c0c0c0" font-size="12">DD: 0.00</text>
<polyline points="2.5,574.0 8.5,582.0 13.5,587.0 18.5,588.0 24.5,586.0 29.5,577.0 34.5,584.0 40.5,579.0 45.5,560.0 50.5,530.0 56.5,517.0 61.5,501.0 66.5,484.6 72.5,505.0 77.5,523.0 82.5,499.0 88.5,513.5 93.5,540.0 98.5,547.0 104.5,556.0 109.5,567.0 115.5,576.0 120.5,566.0 125.5,557.0 131.5,546.0 136.5,539.0 141.5,536.0 147.5,533.0 152.5,535.0 157.5,550.0 163.5,554.0 168.5,530.0 173.5,506.0 179.5,493.0 184.5,507.0 189.5,534.0 195.5,553.0 200.5,534.0 205.5,538.0 211.5,532.0 216.5,522.4 222.5,538.0 227.5,538.0 232.5,552.4 238.5,547.6 243.5,515.0 248.5,512.5 254.5,512.0 259.5,501.0 264.5,495.4 270.5,522.5 275.5,537.0 280.5,551.0 286.5,565.0 291.5,537.0 296.5,527.0 302.5,505.0 307.5,528.0 312.5,507.4 318.5,510.0 323.5,535.0 329.5,508.0 334.5,491.4 339.5,495.4 345.5,482.0 350.5,470.6 355.5,495.0 361.5,513.5 366.5,526.0 371.5,540.0 377.5,522.5 382.5,539.0 387.5,547.0 393.5,560.0 398.5,570.0 403.5,578.4 409.5,572.0 414.5,564.0 419.5,553.0 425.5,543.0 430.5,537.0 436.5,515.0 441.5,490.6 446.5,511.0 452.5,524.0 457.5,542.0 462.5,552.4 468.5,556.0 473.5,562.4 478.5,565.0 484.5,572.4 489.5,526.0 494.5,515.5 500.5,496.0 505.5,482.0 510.5,507.0 516.5,515.0 521.5,533.0 526.5,545.0 532.5,550.0 537.5,564.0 543.5,573.0 548.5,575.6 553.5,548.0 559.5,525.0 564.5,514.0 569.5,490.6 575.5,500.0 580.5,530.0 585.5,551.0 591.5,556.4 596.5,563.6 601.5,536.0 607.5,540.0 612.5,546.4 617.5,547.0 623.5,515.5 628.5,532.0 633.5,548.0 639.5,515.5 644.5,521.0 650.5,542.0 655.5,562.0 660.5,573.4 666.5,574.0 671.5,579.0 676.5,584.0 682.5,587.6 687.5,564.0 692.5,531.0 698.5,552.0 703.5,524.0 708.5,496.0 714.5,485.0 719.5,474.0 724.5,474.0 730.5,484.6 735.5,473.4 740.5,493.0 746.5,516.0 751.5,538.0 757.5,556.0 762.5,567.0 767.5,575.0 773.5,581.0 778.5,586.0 783.5,587.6 789.5,583.0 794.5,580.0 799.5,577.0 805.5,580.0 810.5,586.0 815.5,543.0 821.5,529.0 826.5,550.0 831.5,568.0 837.5,579.0 842.5,538.0 847.5,528.0 853.5,546.0 858.5,561.0 864.5,540.0 869.5,511.0 874.5,519.0 880.5,521.0 885.5,539.5 890.5,548.0 896.5,557.0 901.5,567.0 906.5,576.0 912.5,581.0 917.5,574.0 922.5,567.0 928.5,551.0 933.5,536.0 938.5,543.0 944.5,517.0 949.5,498.0 954.5,492.0 960.5,506.6 965.5,485.0 971.5,475.0 976.5,482.6 981.5,472.6 987.5,472.0 992.5,466.0 997.5,460.0 1003.5,477.0 1008.5,489.0 1013.5,510.0 1019.5,503.0 1024.5,486.0 1029.5,520.0 1035.5,545.0 1040.5,558.0 1045.5,569.0 1051.5,578.8" fill="none" stroke="#ffffff" stroke-width="1"/>
<polyline points="2.5,560.0 8.5,568.0 13.5,575.0 18.5,579.0 24.5,581.0 29.5,580.0 34.5,582.0 40.5,581.0 45.5,577.0 50.5,564.0 56.5,546.0 61.5,528.0 66.5,518.0 72.5,514.0 77.5,519.0 82.5,512.6 88.5,513.0 93.5,522.0 98.5,530.0 104.5,539.0 109.5,548.0 115.5,557.0 120.5,556.0 125.5,556.0 131.5,552.0 136.5,547.0 141.5,543.0 147.5,539.6 152.5,538.0 157.5,543.0 163.5,546.0 168.5,541.0 173.5,528.0 179.5,519.0 184.5,514.3 189.5,521.0 195.5,531.0 200.5,531.0 205.5,532.0 211.5,531.6 216.5,529.6 222.5,532.2 227.5,535.6 232.5,540.0 238.5,542.0 243.5,532.0 248.5,524.4 254.5,520.0 259.5,514.0 264.5,508.5 270.5,513.0 275.5,522.0 280.5,533.0 286.5,542.0 291.5,539.6 296.5,533.0 302.5,526.0 307.5,529.5 312.5,522.5 318.5,518.7 323.5,523.5 329.5,517.5 334.5,508.0 339.5,503.0 345.5,496.0 350.5,487.4 355.5,489.0 361.5,496.0 366.5,507.0 371.5,518.0 377.5,519.8 382.5,526.0 387.5,534.0 393.5,545.0 398.5,554.0 403.5,561.0 409.5,565.0 414.5,564.0 419.5,561.0 425.5,556.0 430.5,548.0 436.5,534.0 441.5,522.0 446.5,518.5 452.5,520.0 457.5,526.0 462.5,534.0 468.5,541.0 473.5,548.0 478.5,554.0 484.5,560.0 489.5,550.0 494.5,538.0 500.5,523.0 505.5,511.8 510.5,510.2 516.5,514.0 521.5,522.0 526.5,530.0 532.5,537.0 537.5,546.0 543.5,554.0 548.5,561.0 553.5,552.0 559.5,543.0 564.5,532.0 569.5,520.0 575.5,512.8 580.5,518.0 585.5,528.0 591.5,537.0 596.5,545.6 601.5,543.6 607.5,542.4 612.5,544.4 617.5,545.0 623.5,537.0 628.5,534.4 633.5,537.6 639.5,530.0 644.5,527.0 650.5,533.0 655.5,544.0 660.5,553.5 666.5,561.0 671.5,567.0 676.5,572.4 682.5,577.0 687.5,575.0 692.5,560.0 698.5,555.0 703.5,543.0 708.5,525.5 714.5,512.0 719.5,499.0 724.5,492.0 730.5,489.0 735.5,483.6 740.5,487.0 746.5,497.0 751.5,513.0 757.5,530.0 762.5,541.0 767.5,552.0 773.5,562.0 778.5,570.0 783.5,575.0 789.5,577.0 794.5,578.0 799.5,578.4 805.5,579.6 810.5,582.0 815.5,568.0 821.5,558.0 826.5,553.6 831.5,557.0 837.5,563.0 842.5,554.0 847.5,546.4 853.5,547.0 858.5,551.6 864.5,548.0 869.5,536.0 874.5,529.0 880.5,526.5 885.5,531.0 890.5,538.0 896.5,544.4 901.5,552.0 906.5,559.0 912.5,565.0 917.5,567.0 922.5,567.0 928.5,561.0 933.5,555.0 938.5,552.0 944.5,538.0 949.5,523.0 954.5,514.0 960.5,510.6 965.5,502.0 971.5,494.0 976.5,490.0 981.5,484.0 987.5,480.6 992.5,475.4 997.5,470.0 1003.5,472.0 1008.5,476.0 1013.5,487.0 1019.5,492.0 1024.5,493.0 1029.5,502.0 1035.5,518.0 1040.5,529.0 1045.5,543.0 1051.5,555.4" fill="none" stroke="#ffff00" stroke-width="1"/>
<polyline points="2.5,602.0 8.5,608.0 13.5,612.4 18.5,604.4 24.5,596.4 29.5,575.6 34.5,590.0 40.5,578.0 45.5,552.0 50.5,517.0 56.5,447.0 61.5,431.0 66.5,416.6 72.5,478.0 77.5,538.0 82.5,475.0 88.5,516.0 93.5,578.0 98.5,578.4 104.5,586.0 109.5,600.0 115.5,611.0 120.5,586.0 125.5,560.0 131.5,538.0 136.5,517.0 141.5,518.4 147.5,516.4 152.5,526.0 157.5,558.0 163.5,570.4 168.5,515.0 173.5,458.0 179.5,444.6 184.5,501.0 189.5,546.0 195.5,598.4 200.5,528.0 205.5,545.6 211.5,530.0 216.5,508.4 222.5,553.0 227.5,541.0 232.5,575.6 238.5,557.0 243.5,478.6 248.5,487.0 254.5,494.0 259.5,475.0 264.5,468.6 270.5,518.0 275.5,549.0 280.5,580.0 286.5,611.0 291.5,532.0 296.5,521.0 302.5,461.4 307.5,548.0 312.5,477.4 318.5,493.0 323.5,553.6 329.5,485.0 334.5,456.6 339.5,478.0 345.5,448.0 350.5,436.6 355.5,492.0 361.5,530.0 366.5,558.0 371.5,586.4 377.5,526.0 382.5,564.0 387.5,569.0 393.5,600.0 398.5,606.0 403.5,615.0 409.5,593.0 414.5,574.0 419.5,551.0 425.5,518.0 430.5,514.6 436.5,457.0 441.5,426.0 446.5,491.0 452.5,526.0 457.5,557.0 462.5,583.6 468.5,582.0 473.5,588.4 478.5,586.4 484.5,598.0 489.5,493.0 494.5,476.0 500.5,438.0 505.5,422.6 510.5,515.0 516.5,526.0 521.5,548.0 526.5,577.0 532.5,578.4 537.5,598.0 543.5,615.0 548.5,594.0 553.5,498.6 559.5,487.0 564.5,465.0 569.5,435.4 575.5,484.0 580.5,527.0 585.5,595.6 591.5,592.4 596.5,595.6 601.5,522.4 607.5,539.0 612.5,554.4 617.5,551.6 623.5,474.6 628.5,517.0 633.5,560.0 639.5,484.6 644.5,507.0 650.5,551.0 655.5,593.0 660.5,616.0 666.5,601.0 671.5,602.4 676.5,606.4 682.5,608.0 687.5,555.0 692.5,472.6 698.5,549.0 703.5,471.0 708.5,431.0 714.5,430.0 719.5,421.4 724.5,442.0 730.5,474.6 735.5,451.4 740.5,499.0 746.5,540.0 751.5,594.0 757.5,616.0 762.5,618.4 767.5,618.0 773.5,621.0 778.5,620.0 783.5,612.0 789.5,594.0 794.5,586.0 799.5,579.0 805.5,585.0 810.5,595.0 815.5,494.0 821.5,473.4 826.5,530.0 831.5,569.0 837.5,590.0 842.5,509.0 847.5,494.6 853.5,534.0 858.5,580.0 864.5,528.0 869.5,462.6 874.5,498.0 880.5,509.0 885.5,553.0 890.5,565.0 896.5,576.0 901.5,586.0 906.5,603.0 912.5,612.0 917.5,596.0 922.5,577.0 928.5,545.0 933.5,498.0 938.5,529.0 944.5,466.0 949.5,444.6 954.5,448.0 960.5,495.0 965.5,453.0 971.5,437.0 976.5,467.4 981.5,447.4 987.5,457.4 992.5,445.0 997.5,440.6 1003.5,475.0 1008.5,505.0 1013.5,555.0 1019.5,516.0 1024.5,477.4 1029.5,542.0 1035.5,600.0 1040.5,616.0 1045.5,622.0 1051.5,626.2" fill="none" stroke="#ff00ff" stroke-width="1"/>
<rect x="1" y="596" width="1053" height="1" fill="#c8c8c8"/>
<line x1="1056" y1="596.5" x2="1068" y2="596.5" stroke="#c80000" stroke-width="1" stroke-dasharray="1 3"/>
<rect x="78" y="595" width="9" height="1" fill="#00ff00"/>
<rect x="81" y="523" width="3" height="73" fill="#ff0000"/>
<rect x="116" y="595" width="9" height="1" fill="#00ff00"/>
<rect x="119" y="523" width="3" height="73" fill="#ff0000"/>
<rect x="143" y="595" width="9" height="1" fill="#00ff00"/>
<rect x="146" y="523" width="3" height="73" fill="#ff0000"/>
<rect x="239" y="595" width="9" height="1" fill="#00ff00"/>
<rect x="242" y="523" width="3" height="73" fill="#ff0000"/>
<rect x="325" y="595" width="9" height="1" fill="#00ff00"/>
<rect x="328" y="523" width="3" height="73" fill="#ff0000"/>
<rect x="619" y="595" width="9" height="1" fill="#00ff00"/>
<rect x="622" y="523" width="3" height="73" fill="#ff0000"/>
<rect x="635" y="595" width="9" height="1" fill="#00ff00"/>
<rect x="638" y="523" width="3" height="73" fill="#ff0000"/>
<rect x="662" y="595" width="9" height="1" fill="#00ff00"/>
<rect x="665" y="523" width="3" height="73" fill="#ff0000"/>
<rect x="699" y="595" width="9" height="1" fill="#00ff00"/>
<rect x="702" y="523" width="3" height="73" fill="#ff0000"/>
<rect x="795" y="595" width="9" height="1" fill="#00ff00"/>
<rect x="798" y="523" width="3" height="73" fill="#ff0000"/>
<rect x="838" y="595" width="9" height="1" fill="#00ff00"/>
<rect x="841" y="523" width="3" height="73" fill="#ff0000"/>
<rect x="865" y="595" width="9" height="1" fill="#00ff00"/>
<rect x="868" y="523" width="3" height="73" fill="#ff0000"/>
<rect x="940" y="595" width="9" height="1" fill="#00ff00"/>
<rect x="943" y="523" width="3" height="73" fill="#ff0000"/>
<rect x="1020" y="595" width="9" height="1" fill="#00ff00"/>
<rect x="1023" y="523" width="3" height="73" fill="#ff0000"/>
<rect x="23" y="552" width="3" height="44" fill="#ffff00"/>
<rect x="119" y="552" width="3" height="44" fill="#ffff00"/>
<rect x="199" y="552" width="3" height="44" fill="#ffff00"/>
<rect x="290" y="552" width="3" height="44" fill="#ffff00"/>
<rect x="408" y="552" width="3" height="44" fill="#ffff00"/>
<rect x="488" y="552" width="3" height="44" fill="#ffff00"/>
<rect x="552" y="552" width="3" height="44" fill="#ffff00"/>
<rect x="600" y="552" width="3" height="44" fill="#ffff00"/>
<rect x="686" y="552" width="3" height="44" fill="#ffff00"/>
<rect x="788" y="552" width="3" height="44" fill="#ffff00"/>
<rect x="814" y="552" width="3" height="44" fill="#ffff00"/>
<rect x="916" y="552" width="3" height="44" fill="#ffff00"/>
<rect x="12" y="597" width="3" height="15" fill="#ff0000"/>
<rect x="114" y="597" width="3" height="15" fill="#ff0000"/>
<rect x="285" y="597" width="3" height="15" fill="#ff0000"/>
<rect x="402" y="597" width="3" height="15" fill="#ff0000"/>
<rect x="542" y="597" width="3" height="15" fill="#ff0000"/>
<rect x="659" y="597" width="3" height="15" fill="#ff0000"/>
<rect x="756" y="597" width="3" height="15" fill="#ff0000"/>
<rect x="761" y="597" width="3" height="15" fill="#ff0000"/>
<rect x="766" y="597" width="3" height="15" fill="#ff0000"/>
<rect x="772" y="597" width="3" height="15" fill="#ff0000"/>
<rect x="777" y="597" width="3" height="15" fill="#ff0000"/>
<rect x="782" y="597" width="3" height="15" fill="#ff0000"/>
<rect x="911" y="597" width="3" height="15" fill="#ff0000"/>
<rect x="1039" y="597" width="3" height="15" fill="#ff0000"/>
<rect x="1044" y="597" width="3" height="15" fill="#ff0000"/>
<rect x="1050" y="597" width="3" height="15" fill="#ff0000"/>
<text x="81" y="572" fill="#ffff00" stroke="#ffff00" font-size="12">买</text>
<text x="119" y="572" fill="#ffff00" stroke="#ffff00" font-size="12">买</text>
<text x="146" y="572" fill="#ffff00" stroke="#ffff00" font-size="12">买</text>
<text x="242" y="572" fill="#ffff00" stroke="#ffff00" font-size="12">买</text>
<text x="328" y="572" fill="#ffff00" stroke="#ffff00" font-size="12">买</text>
<text x="622" y="572" fill="#ffff00" stroke="#ffff00" font-size="12">买</text>
<text x="638" y="572" fill="#ffff00" stroke="#ffff00" font-size="12">买</text>
<text x="665" y="572" fill="#ffff00" stroke="#ffff00" font-size="12">买</text>
<text x="702" y="572" fill="#ffff00" stroke="#ffff00" font-size="12">买</text>
<text x="798" y="572" fill="#ffff00" stroke="#ffff00" font-size="12">买</text>
<text x="841" y="572" fill="#ffff00" stroke="#ffff00" font-size="12">买</text>
<text x="868" y="572" fill="#ffff00" stroke="#ffff00" font-size="12">买</text>
<text x="943" y="572" fill="#ffff00" stroke="#ffff00" font-size="12">买</text>
<text x="1023" y="572" fill="#ffff00" stroke="#ffff00" font-size="12">买</text>
<text x="23" y="572" fill="#ffff00" stroke="#ffff00" font-size="12">关注</text>
<text x="119" y="572" fill="#ffff00" stroke="#ffff00" font-size="12">关注</text>
<text x="199" y="572" fill="#ffff00" stroke="#ffff00" font-size="12">关注</text>
<text x="290" y="572" fill="#ffff00" stroke="#ffff00" font-size="12">关注</text>
<text x="408" y="572" fill="#ffff00" stroke="#ffff00" font-size="12">关注</text>
<text x="488" y="572" fill="#ffff00" stroke="#ffff00" font-size="12">关注</text>
<text x="552" y="572" fill="#ffff00" stroke="#ffff00" font-size="12">关注</text>
<text x="600" y="572" fill="#ffff00" stroke="#ffff00" font-size="12">关注</text>
<text x="686" y="572" fill="#ffff00" stroke="#ffff00" font-size="12">关注</text>
<text x="788" y="572" fill="#ffff00" stroke="#ffff00" font-size="12">关注</text>
<text x="814" y="572" fill="#ffff00" stroke="#ffff00" font-size="12">关注</text>
<text x="916" y="572" fill="#ffff00" stroke="#ffff00" font-size="12">关注</text>
<text x="13" y="616" fill="#ffff00" stroke="#ffff00" font-size="12">底</text>
<text x="115" y="616" fill="#ffff00" stroke="#ffff00" font-size="12">底</text>
<text x="286" y="616" fill="#ffff00" stroke="#ffff00" font-size="12">底</text>
<text x="403" y="616" fill="#ffff00" stroke="#ffff00" font-size="12">底</text>
<text x="543" y="616" fill="#ffff00" stroke="#ffff00" font-size="12">底</text>
<text x="660" y="616" fill="#ffff00" stroke="#ffff00" font-size="12">底</text>
<text x="757" y="616" fill="#ffff00" stroke="#ffff00" font-size="12">底</text>
<text x="762" y="616" fill="#ffff00" stroke="#ffff00" font-size="12">底</text>
<text x="767" y="616" fill="#ffff00" stroke="#ffff00" font-size="12">底</text>
<text x="773" y="616" fill="#ffff00" stroke="#ffff00" font-size="12">底</text>
<text x="778" y="616" fill="#ffff00" stroke="#ffff00" font-size="12">底</text>
<text x="783" y="616" fill="#ffff00" stroke="#ffff00" font-size="12">底</text>
<text x="912" y="616" fill="#ffff00" stroke="#ffff00" font-size="12">底</text>
<text x="1040" y="616" fill="#ffff00" stroke="#ffff00" font-size="12">底</text>
<text x="1045" y="616" fill="#ffff00" stroke="#ffff00" font-size="12">底</text>
<text x="1051" y="616" fill="#ffff00" stroke="#ffff00" font-size="12">底</text>
<rect x="60" y="630" width="1" height="17" fill="#b40000"/>
<text x="61.5" y="642.8" fill="#ff3c3c" stroke="#ff3c3c" font-size="12">5</text>
<rect x="162" y="630" width="1" height="17" fill="#b40000"/>
<text x="163.5" y="642.8" fill="#ff3c3c" stroke="#ff3c3c" font-size="12">6</text>
<rect x="269" y="630" width="1" height="17" fill="#b40000"/>
<text x="270.5" y="642.8" fill="#ff3c3c" stroke="#ff3c3c" font-size="12">7</text>
<rect x="392" y="630" width="1" height="17" fill="#b40000"/>
<text x="393.5" y="642.8" fill="#ff3c3c" stroke="#ff3c3c" font-size="12">8</text>
<rect x="504" y="630" width="1" height="17" fill="#b40000"/>
<text x="505.5" y="642.8" fill="#ff3c3c" stroke="#ff3c3c" font-size="12">9</text>
<rect x="713" y="630" width="1" height="17" fill="#b40000"/>
<text x="714.5" y="642.8" fill="#ff3c3c" stroke="#ff3c3c" font-size="12">11</text>
<rect x="820" y="630" width="1" height="17" fill="#b40000"/>
<text x="821.5" y="642.8" fill="#ff3c3c" stroke="#ff3c3c" font-size="12">12</text>
<rect x="943" y="630" width="1" height="17" fill="#b40000"/>
<text x="944.5" y="642.8" fill="#ff3c3c" stroke="#ff3c3c" font-size="12">1</text>
<text x="2.5" y="643" fill="#ff3c3c" stroke="#ff3c3c" font-size="12">2025年</text>
<rect x="86" y="631" width="1" height="3" fill="#b40000"/>
<rect x="112" y="631" width="1" height="3" fill="#b40000"/>
<rect x="138" y="631" width="1" height="3" fill="#b40000"/>
<rect x="189" y="631" width="1" height="3" fill="#b40000"/>
<rect x="214" y="631" width="1" height="3" fill="#b40000"/>
<rect x="242" y="631" width="1" height="3" fill="#b40000"/>
<rect x="300" y="631" width="1" height="3" fill="#b40000"/>
<rect x="331" y="631" width="1" height="3" fill="#b40000"/>
<rect x="361" y="631" width="1" height="3" fill="#b40000"/>
<rect x="420" y="631" width="1" height="3" fill="#b40000"/>
<rect x="448" y="631" width="1" height="3" fill="#b40000"/>
<rect x="477" y="631" width="1" height="3" fill="#b40000"/>
<rect x="535" y="631" width="1" height="3" fill="#b40000"/>
<rect x="564" y="631" width="1" height="3" fill="#b40000"/>
<rect x="667" y="631" width="1" height="3" fill="#b40000"/>
<rect x="691" y="631" width="1" height="3" fill="#b40000"/>
<rect x="741" y="631" width="1" height="3" fill="#b40000"/>
<rect x="767" y="631" width="1" height="3" fill="#b40000"/>
<rect x="793" y="631" width="1" height="3" fill="#b40000"/>
<rect x="851" y="631" width="1" height="3" fill="#b40000"/>
<rect x="882" y="631" width="1" height="3" fill="#b40000"/>
<rect x="912" y="631" width="1" height="3" fill="#b40000"/>
<rect x="970" y="631" width="1" height="3" fill="#b40000"/>
<rect x="583" y="631" width="78" height="15" fill="#000080"/>
<text x="585" y="642.3" fill="#dcdcdc" stroke="#dcdcdc" font-size="12">2025/09/22/一</text>
<rect x="42" y="647" width="1" height="3" fill="#b40000"/>
<rect x="73" y="647" width="1" height="3" fill="#b40000"/>
<rect x="116" y="647" width="1" height="3" fill="#b40000"/>
<rect x="145" y="647" width="1" height="3" fill="#b40000"/>
<rect x="178" y="647" width="1" height="3" fill="#b40000"/>
<rect x="207" y="647" width="1" height="3" fill="#b40000"/>
<rect x="242" y="647" width="1" height="3" fill="#b40000"/>
<rect x="282" y="647" width="1" height="3" fill="#b40000"/>
<rect x="308" y="647" width="1" height="3" fill="#b40000"/>
<rect x="332" y="647" width="1" height="3" fill="#b40000"/>
<rect x="364" y="647" width="1" height="3" fill="#b40000"/>
<rect x="390" y="647" width="1" height="3" fill="#b40000"/>
<rect x="422" y="647" width="1" height="3" fill="#b40000"/>
<rect x="480" y="647" width="1" height="3" fill="#b40000"/>
<rect x="508" y="647" width="1" height="3" fill="#b40000"/>
<rect x="536" y="647" width="1" height="3" fill="#b40000"/>
<rect x="569" y="647" width="1" height="3" fill="#b40000"/>
<rect x="599" y="647" width="1" height="3" fill="#b40000"/>
<rect x="629" y="647" width="1" height="3" fill="#b40000"/>
<rect x="664" y="647" width="1" height="3" fill="#b40000"/>
<rect x="696" y="647" width="1" height="3" fill="#b40000"/>
<rect x="736" y="647" width="1" height="3" fill="#b40000"/>
<rect x="767" y="647" width="1" height="3" fill="#b40000"/>
<rect x="807" y="647" width="1" height="3" fill="#b40000"/>
<rect x="839" y="647" width="1" height="3" fill="#b40000"/>
<rect x="871" y="647" width="1" height="3" fill="#b40000"/>
<rect x="9" y="648" width="1" height="2" fill="#d0d0d0"/>
<rect x="12" y="648" width="1" height="2" fill="#d0d0d0"/>
<rect x="17" y="648" width="1" height="2" fill="#d0d0d0"/>
<rect x="20" y="648" width="1" height="2" fill="#d0d0d0"/>
<rect x="23" y="648" width="1" height="2" fill="#d0d0d0"/>
<rect x="51" y="648" width="1" height="2" fill="#d0d0d0"/>
<rect x="828" y="648" width="1" height="2" fill="#d0d0d0"/>
<rect x="845" y="648" width="8" height="2" fill="#54fcfc"/>
<rect x="856" y="648" width="10" height="2" fill="#54fcfc"/>
<rect x="978" y="600" width="152" height="50" fill="#000"/>
<text x="998.5" y="627" fill="#fff" font-size="20.8" font-weight="bold" font-family='"Liberation Serif","Noto Serif CJK SC",serif' shape-rendering="geometricPrecision">乐淘公式网</text>
<text x="1001" y="643.7" fill="#fff" font-size="15" font-weight="bold" font-family='"Liberation Serif",serif'>www.60lt.com</text>
<rect x="1128" y="7" width="2" height="12" fill="#ff5050"/>
<rect x="1122" y="25" width="8" height="1" fill="#b40000"/>
<rect x="1122" y="45" width="8" height="1" fill="#b40000"/>
<rect x="1122" y="142" width="8" height="1" fill="#b40000"/>
<rect x="1122" y="238" width="8" height="1" fill="#b40000"/>
<rect x="1122" y="335" width="8" height="1" fill="#b40000"/>
<rect x="1122" y="397" width="8" height="1" fill="#b40000"/>
<rect x="1122" y="418" width="8" height="1" fill="#b40000"/>
<rect x="1122" y="436" width="8" height="1" fill="#b40000"/>
<text x="1125" y="41" fill="#b0b0b0" stroke="#b0b0b0" font-size="16">委</text>
<text x="1125" y="64" fill="#b0b0b0" stroke="#b0b0b0" font-size="16">卖</text>
<text x="1125" y="82.8" fill="#b0b0b0" stroke="#b0b0b0" font-size="16">卖</text>
<text x="1125" y="101.6" fill="#b0b0b0" stroke="#b0b0b0" font-size="16">卖</text>
<text x="1125" y="120.4" fill="#b0b0b0" stroke="#b0b0b0" font-size="16">卖</text>
<text x="1125" y="139.2" fill="#b0b0b0" stroke="#b0b0b0" font-size="16">卖</text>
<text x="1125" y="160" fill="#b0b0b0" stroke="#b0b0b0" font-size="16">买</text>
<text x="1125" y="178.8" fill="#b0b0b0" stroke="#b0b0b0" font-size="16">买</text>
<text x="1125" y="197.6" fill="#b0b0b0" stroke="#b0b0b0" font-size="16">买</text>
<text x="1125" y="216.4" fill="#b0b0b0" stroke="#b0b0b0" font-size="16">买</text>
<text x="1125" y="235.2" fill="#b0b0b0" stroke="#b0b0b0" font-size="16">买</text>
<text x="1125" y="257" fill="#b0b0b0" stroke="#b0b0b0" font-size="16">现</text>
<text x="1125" y="276" fill="#b0b0b0" stroke="#b0b0b0" font-size="16">涨</text>
<text x="1125" y="295" fill="#b0b0b0" stroke="#b0b0b0" font-size="16">涨</text>
<text x="1125" y="314" fill="#b0b0b0" stroke="#b0b0b0" font-size="16">总</text>
<text x="1125" y="332" fill="#b0b0b0" stroke="#b0b0b0" font-size="16">外</text>
<text x="1125" y="354" fill="#b0b0b0" stroke="#b0b0b0" font-size="16">换</text>
<text x="1125" y="373" fill="#b0b0b0" stroke="#b0b0b0" font-size="16">净</text>
<text x="1125" y="392" fill="#b0b0b0" stroke="#b0b0b0" font-size="16">收</text>
<text x="1125" y="414" fill="#ffff00" stroke="#ffff00" font-size="15">自</text>
<text x="1123.5" y="433" fill="#e8e8e8" stroke="#e8e8e8" font-size="14">交</text>
<text x="1123.5" y="452.2" fill="#e0e0e0" stroke="#e0e0e0" font-size="13.5">1</text>
<text x="1123.5" y="470" fill="#e0e0e0" stroke="#e0e0e0" font-size="13.5">1</text>
<text x="1123.5" y="487.8" fill="#e0e0e0" stroke="#e0e0e0" font-size="13.5">1</text>
<text x="1123.5" y="505.6" fill="#e0e0e0" stroke="#e0e0e0" font-size="13.5">1</text>
<text x="1123.5" y="523.4" fill="#e0e0e0" stroke="#e0e0e0" font-size="13.5">1</text>
<text x="1123.5" y="541.2" fill="#e0e0e0" stroke="#e0e0e0" font-size="13.5">1</text>
<text x="1123.5" y="559" fill="#e0e0e0" stroke="#e0e0e0" font-size="13.5">1</text>
<text x="1123.5" y="576.8" fill="#e0e0e0" stroke="#e0e0e0" font-size="13.5">1</text>
<text x="1123.5" y="594.6" fill="#e0e0e0" stroke="#e0e0e0" font-size="13.5">1</text>
</svg>
</body></html>
